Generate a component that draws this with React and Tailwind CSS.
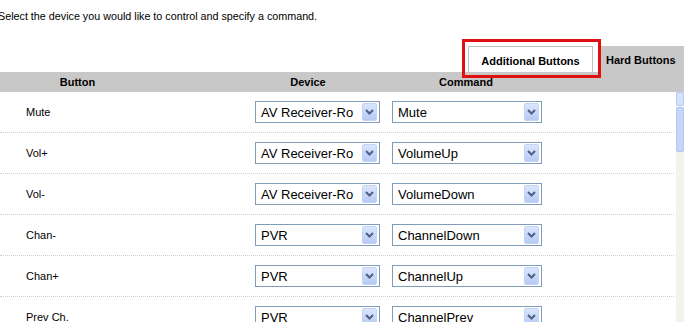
import React from "react";

const rows = [
  { label: "Mute", device: "AV Receiver-Ro", cmd: "Mute" },
  { label: "Vol+", device: "AV Receiver-Ro", cmd: "VolumeUp" },
  { label: "Vol-", device: "AV Receiver-Ro", cmd: "VolumeDown" },
  { label: "Chan-", device: "PVR", cmd: "ChannelDown" },
  { label: "Chan+", device: "PVR", cmd: "ChannelUp" },
  { label: "Prev Ch.", device: "PVR", cmd: "ChannelPrev" },
];

function Arrow() {
  return (
    <div className="flex h-[18px] w-[15px] items-center justify-center rounded-[2px] border border-[#c3d3f6] bg-gradient-to-b from-[#dbe6fd] to-[#b7caf5]">
      <svg width="9" height="6" viewBox="0 0 9 6">
        <path d="M1 1 L4.5 4.5 L8 1" stroke="#4d6185" strokeWidth="2" fill="none" />
      </svg>
    </div>
  );
}

function Select({ value, width }) {
  return (
    <div
      className={`flex h-[22px] items-center justify-between border border-[#7f9db9] bg-white pl-[5px] pr-[2px] ${width}`}
    >
      <span className="whitespace-nowrap text-[13px] leading-none text-black">
        {value}
      </span>
      <Arrow />
    </div>
  );
}

export default function App() {
  return (
    <div
      className="relative h-[322px] w-[684px] overflow-hidden bg-white text-[11px] text-black"
      style={{ fontFamily: '"Liberation Sans", Arial, sans-serif' }}
    >
      <p className="ml-[-2px] pt-[10px] text-[10.75px] leading-[13px]">
        Select the device you would like to control and specify a command.
      </p>

      <div className="mt-[24px] flex h-[25px] items-end justify-end">
        <div className="mr-[5px] flex h-[26px] w-[125px] items-center justify-center border border-b-0 border-[#c0c0c0] bg-white pt-[4px] font-bold">
          Additional Buttons
        </div>
        <div className="flex h-[26px] w-[86px] items-center bg-[#c8c8c8] pl-[8px] pt-[2px] font-bold">
          Hard Buttons
        </div>
      </div>

      <div className="flex h-[20px] items-center bg-[#c8c8c8] font-bold">
        <div className="w-[155px] text-center">Button</div>
        <div className="w-[306px] text-center">Device</div>
        <div className="ml-[-25px] w-[60px] text-center">Command</div>
      </div>

      <div className="flex">
        <div className="w-[674px]">
          {rows.map((r, i) => (
            <div
              key={i}
              className="flex h-[41px] items-center border-b border-dotted border-[#cfcfcf]"
            >
              <div className="w-[255px] pl-[26px]">{r.label}</div>
              <Select value={r.device} width="w-[125px]" />
              <div className="w-[12px]" />
              <Select value={r.cmd} width="w-[150px]" />
            </div>
          ))}
        </div>
        <div className="ml-[2px] flex w-[8px] flex-col bg-[#f4f2ec]">
          <div className="h-[14px] w-full rounded-[2px] border border-[#b4c8f6] bg-[#d6e3fd]" />
          <div className="mt-[1px] h-[45px] w-full rounded-[2px] border border-[#b4c8f6] bg-[#c6d6fb]" />
        </div>
      </div>

      <div className="absolute left-[462px] top-[39px] h-[39px] w-[139px] border-[3px] border-[#e01010]" />
    </div>
  );
}
